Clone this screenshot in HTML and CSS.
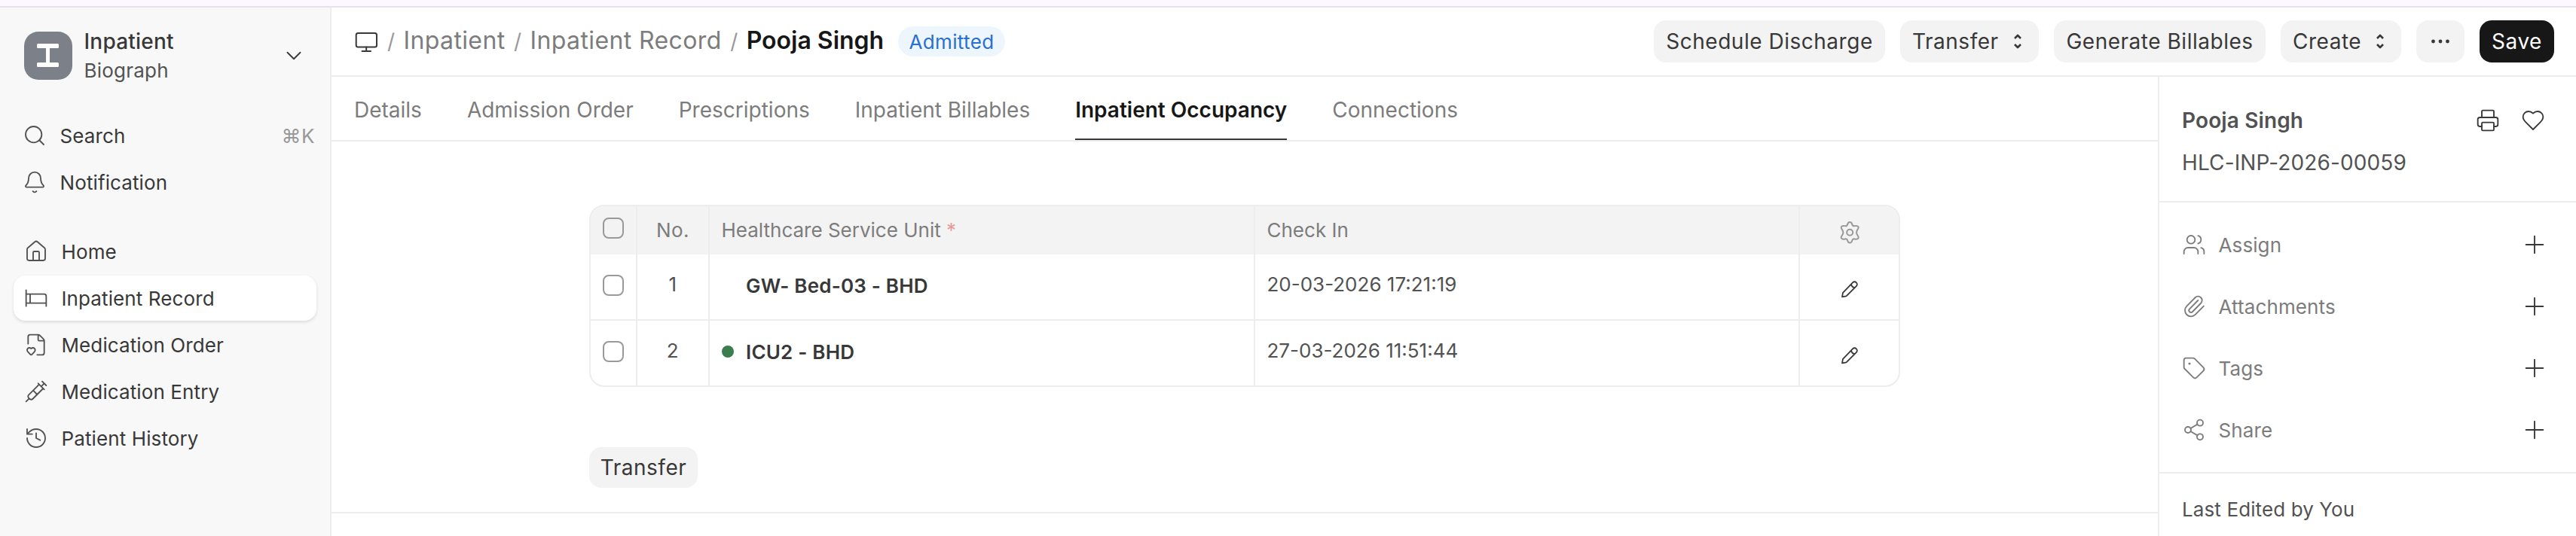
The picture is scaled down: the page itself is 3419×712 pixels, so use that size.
FILE: index.html
```html
<!DOCTYPE html>
<html lang="en">
<head>
<meta charset="utf-8">
<title>Pooja Singh - Inpatient Record</title>
<link rel="stylesheet" href="styles.css">
</head>
<body>
<div class="strip"></div>
<div class="app">
  <aside class="sidebar">
    <div class="workspace">
      <svg class="logo" viewBox="0 0 64 64"><rect width="64" height="64" rx="19" fill="#7c8088"/><path d="M18.5 16h26a1.5 1.5 0 0 1 1.5 1.5v3a1.5 1.5 0 0 1-1.5 1.5H34v19h10.500a1.500 1.500 0 0 1 1.500 1.500v3a1.500 1.500 0 0 1-1.500 1.500h-26a1.500 1.500 0 0 1-1.500-1.500v-3a1.500 1.500 0 0 1 1.500-1.500H29V22H18.500a1.500 1.500 0 0 1-1.500-1.500v-3a1.500 1.500 0 0 1 1.500-1.500z" fill="#fff"/></svg>
      <div class="workspace-names"><span class="workspace-title">Inpatient</span><span class="workspace-sub">Biograph</span></div>
      <svg class="icon chevron" viewBox="0 0 24 24"><path d="m6 9 6 6 6-6"/></svg>
    </div>
    <nav class="quick">
      <a class="nav-item"><svg class="icon" viewBox="0 0 24 24"><circle cx="11" cy="11" r="8"/><path d="m21 21-4.300-4.300"/></svg><span class="t">Search</span><span class="shortcut t">⌘K</span></a>
      <a class="nav-item"><svg class="icon" viewBox="0 0 24 24"><path d="M10.268 21a2 2 0 0 0 3.464 0M3.262 15.326A1 1 0 0 0 4 17h16a1 1 0 0 0 .74-1.673C19.410 13.956 18 12.499 18 8A6 6 0 0 0 6 8c0 4.499-1.411 5.956-2.738 7.326"/></svg><span class="t">Notification</span></a>
    </nav>
    <nav class="links">
      <a class="nav-item"><svg class="icon" viewBox="0 0 24 24"><path d="M15 21v-8a1 1 0 0 0-1-1h-4a1 1 0 0 0-1 1v8"/><path d="M3 10a2 2 0 0 1 .709-1.528l7-6a2 2 0 0 1 2.582 0l7 6A2 2 0 0 1 21 10v9a2 2 0 0 1-2 2H5a2 2 0 0 1-2-2z"/></svg><span class="t">Home</span></a>
      <a class="nav-item active"><svg class="icon" viewBox="0 0 24 24"><path d="M2 4v16M2 8h18a2 2 0 0 1 2 2v10M2 17h20M6 8v9"/></svg><span class="t">Inpatient Record</span></a>
      <a class="nav-item"><svg class="icon" viewBox="0 0 24 24"><path d="M13 22h5a2 2 0 0 0 2-2V8a2.400 2.400 0 0 0-.706-1.706l-3.588-3.588A2.400 2.400 0 0 0 14 2H6a2 2 0 0 0-2 2v7M14 2v5a1 1 0 0 0 1 1h5M3.620 18.800A2.250 2.250 0 1 1 7 15.836a2.250 2.250 0 1 1 3.380 2.966l-2.626 2.856a1 1 0 0 1-1.507 0z"/></svg><span class="t">Medication Order</span></a>
      <a class="nav-item"><svg class="icon" viewBox="0 0 24 24"><path d="m18 2 4 4M17 7l3-3M19 9 8.700 19.300c-1 1-2.500 1-3.400 0l-.6-.6c-1-1-1-2.500 0-3.400L15 5M9 11l4 4M5 19l-3 3M14 4l6 6"/></svg><span class="t">Medication Entry</span></a>
      <a class="nav-item"><svg class="icon" viewBox="0 0 24 24"><path d="M3 12a9 9 0 1 0 9-9 9.750 9.750 0 0 0-6.740 2.740L3 8M3 3v5h5M12 7v5l4 2"/></svg><span class="t">Patient History</span></a>
    </nav>
  </aside>
  <div class="page">
    <header class="topbar">
      <div class="crumbs">
        <svg class="desk" viewBox="0 0 30 28"><rect x="1.700" y="2" width="27.300" height="18.500" rx="2.500"/><path d="M15.200 20.500V26M9.500 26h11.500"/></svg>
        <span class="slash">/</span><span class="crumb">Inpatient</span><span class="slash">/</span><span class="crumb">Inpatient Record</span><span class="slash">/</span><span class="crumb current">Pooja Singh</span>
        <span class="badge">Admitted</span>
      </div>
      <div class="actions">
        <button class="btn b-discharge">Schedule Discharge</button>
        <button class="btn menu b-transfer">Transfer<svg class="updown" viewBox="0 0 12 20"><path d="m2 6 4-4 4 4M2 14l4 4 4-4"/></svg></button>
        <button class="btn b-generate">Generate Billables</button>
        <button class="btn menu b-create">Create<svg class="updown" viewBox="0 0 12 20"><path d="m2 6 4-4 4 4M2 14l4 4 4-4"/></svg></button>
        <button class="btn b-more"><svg class="dots" viewBox="0 0 24 6"><circle cx="2.500" cy="3" r="2.400"/><circle cx="12" cy="3" r="2.400"/><circle cx="21.500" cy="3" r="2.400"/></svg></button>
        <button class="btn primary b-save">Save</button>
      </div>
    </header>
    <div class="body">
      <main class="main">
        <div class="tabs">
          <a class="tab">Details</a><a class="tab">Admission Order</a><a class="tab">Prescriptions</a><a class="tab">Inpatient Billables</a><a class="tab selected">Inpatient Occupancy</a><a class="tab">Connections</a>
        </div>
        <section class="form">
          <div class="grid">
            <div class="grid-row head">
              <div class="cell check"><span class="checkbox"></span></div>
              <div class="cell num">No.</div>
              <div class="cell">Healthcare Service Unit <span class="req">*</span></div>
              <div class="cell">Check In</div>
              <div class="cell tool"><svg class="icon gear" viewBox="0 0 27 30"><path d="M13.200 1c1.600 0 2.400 1 2.900 2.600.5 1.700 1.400 2.900 3.200 2.600 2-.4 4-.9 5 .8.9 1.700.1 2.800-.8 3.900-1.700 2.300-1.700 5.500 0 7.800.9 1.100 1.700 2.300.8 3.900-1 1.700-3 1.200-5 .8-1.800-.3-2.700.9-3.200 2.600-.5 1.600-1.300 2.600-2.900 2.600s-2.400-1-2.900-2.600c-.5-1.700-1.400-2.900-3.200-2.600-2 .4-4 .9-5-.8-.9-1.600-.1-2.800.8-3.900 1.700-2.300 1.700-5.500 0-7.800-.9-1.100-1.700-2.200-.8-3.900 1-1.700 3-1.200 5-.8 1.800.3 2.700-.9 3.200-2.600.5-1.600 1.300-2.600 2.900-2.600z"/><circle cx="13.200" cy="14.800" r="4"/></svg></div>
            </div>
            <div class="grid-row">
              <div class="cell check"><span class="checkbox"></span></div>
              <div class="cell num">1</div>
              <div class="cell unit"><span class="dot off"></span><span class="t">GW- Bed-03 - BHD</span></div>
              <div class="cell">20-03-2026 17:21:19</div>
              <div class="cell tool"><svg class="icon pencil" viewBox="0 0 24 24"><path d="m2 21.300 1-5.500L16 2.300a3.300 3.300 0 0 1 4.800 0 3.300 3.300 0 0 1 0 4.800L7.500 20.300zM14 4.500q1 4.500 4.800 4.600"/></svg></div>
            </div>
            <div class="grid-row">
              <div class="cell check"><span class="checkbox"></span></div>
              <div class="cell num">2</div>
              <div class="cell unit"><span class="dot"></span><span class="t">ICU2 - BHD</span></div>
              <div class="cell">27-03-2026 11:51:44</div>
              <div class="cell tool"><svg class="icon pencil" viewBox="0 0 24 24"><path d="m2 21.300 1-5.500L16 2.300a3.300 3.300 0 0 1 4.800 0 3.300 3.300 0 0 1 0 4.800L7.500 20.300zM14 4.500q1 4.500 4.800 4.600"/></svg></div>
            </div>
          </div>
          <button class="btn b-row">Transfer</button>
        </section>
      </main>
      <aside class="panel">
        <div class="panel-head">
          <div class="panel-title"><strong>Pooja Singh</strong>
            <svg class="icon" viewBox="0 0 24 24"><path d="M6 18H4a2 2 0 0 1-2-2v-5a2 2 0 0 1 2-2h16a2 2 0 0 1 2 2v5a2 2 0 0 1-2 2h-2M6 9V3a1 1 0 0 1 1-1h10a1 1 0 0 1 1 1v6"/><rect x="6" y="14" width="12" height="8" rx="1"/></svg>
            <svg class="icon" viewBox="0 0 24 24"><path d="M19 14c1.490-1.460 3-3.210 3-5.500A5.500 5.500 0 0 0 16.500 3c-1.760 0-3 .5-4.500 2-1.500-1.500-2.740-2-4.500-2A5.500 5.500 0 0 0 2 8.500c0 2.300 1.500 4.050 3 5.500l7 7Z"/></svg>
          </div>
          <div class="panel-id">HLC-INP-2026-00059</div>
        </div>
        <div class="panel-links">
          <div class="link"><svg class="icon" viewBox="0 0 24 24"><path d="M16 21v-2a4 4 0 0 0-4-4H6a4 4 0 0 0-4 4v2M16 3.128a4 4 0 0 1 0 7.744M22 21v-2a4 4 0 0 0-3-3.870"/><circle cx="9" cy="7" r="4"/></svg><span class="t">Assign</span><svg class="icon plus" viewBox="0 0 24 24"><path d="M3.500 12h17M12 3.500v17"/></svg></div>
          <div class="link"><svg class="icon" viewBox="0 0 24 24"><path d="m16 6-8.414 8.586a2 2 0 0 0 2.829 2.829l8.414-8.586a4 4 0 1 0-5.657-5.657l-8.379 8.551a6 6 0 1 0 8.485 8.485l8.379-8.551"/></svg><span class="t">Attachments</span><svg class="icon plus" viewBox="0 0 24 24"><path d="M3.500 12h17M12 3.500v17"/></svg></div>
          <div class="link"><svg class="icon" viewBox="0 0 24 24"><path d="M12.586 2.586A2 2 0 0 0 11.172 2H4a2 2 0 0 0-2 2v7.172a2 2 0 0 0 .586 1.414l8.704 8.704a2.426 2.426 0 0 0 3.420 0l6.580-6.580a2.426 2.426 0 0 0 0-3.420z"/><circle cx="7.500" cy="7.500" r=".5" fill="currentColor"/></svg><span class="t">Tags</span><svg class="icon plus" viewBox="0 0 24 24"><path d="M3.500 12h17M12 3.500v17"/></svg></div>
          <div class="link"><svg class="icon" viewBox="0 0 24 24"><circle cx="18" cy="5" r="3"/><circle cx="6" cy="12" r="3"/><circle cx="18" cy="19" r="3"/><path d="m8.590 13.510 6.830 3.980M15.410 6.510l-6.820 3.980"/></svg><span class="t">Share</span><svg class="icon plus" viewBox="0 0 24 24"><path d="M3.500 12h17M12 3.500v17"/></svg></div>
        </div>
        <div class="panel-foot">Last Edited by You</div>
      </aside>
    </div>
  </div>
</div>
</body>
</html>
```
FILE: styles.css
```css
* { box-sizing: border-box; }
body { margin: 0; width: 3419px; height: 712px; overflow: hidden; display: flex; flex-direction: column; background: #fff; color: #383838; font: 420 26px/30px Inter, "Liberation Sans", sans-serif; letter-spacing: 0.11px; white-space: nowrap; }
.strip { height: 10px; flex: none; background: #fdf7ff; border-bottom: 2px solid #e8e0ec; }
.app { display: flex; flex: 1; min-height: 0; }
.icon { width: 32px; height: 32px; flex: none; fill: none; stroke: currentColor; stroke-width: 1.4; stroke-linecap: round; stroke-linejoin: round; }

/* Sidebar */
.sidebar { width: 440px; flex: none; background: #f8f8f8; border-right: 2px solid #ededed; padding-top: 32px; }
.workspace { display: flex; height: 64px; padding: 0 31px 0 32px; }
.logo { width: 64px; height: 64px; }
.workspace-names { flex: 1; display: flex; flex-direction: column; padding-left: 15.5px; }
.workspace-title { font-size: 28px; font-weight: 500; height: 32px; line-height: 26px; letter-spacing: 0.22px; }
.workspace-sub { color: #525252; height: 34px; line-height: 43px; letter-spacing: 0.22px; }
.chevron { width: 34px; height: 34px; margin-top: 15px; stroke-width: 1.3; }
.quick { padding: 44px 20px 0 16px; display: flex; flex-direction: column; gap: 2px; }
.links { padding: 32px 18px 0; display: flex; flex-direction: column; gap: 2px; }
.nav-item { display: flex; align-items: center; height: 60px; padding: 0 14px; border-radius: 16px; gap: 17.5px; }
.nav-item .t { padding-top: 1px; }
.nav-item .icon { color: #525252; }
.nav-item.active { background: #fff; box-shadow: 0 2px 4px rgba(0, 0, 0, 0.12); }
.quick .nav-item { padding-right: 0; }
.shortcut { margin-left: auto; color: #999; letter-spacing: 0.52px; }

/* Header */
.page { flex: 1; display: flex; flex-direction: column; min-width: 0; }
.topbar { height: 92px; flex: none; border-bottom: 2px solid #ededed; display: flex; justify-content: space-between; padding: 0 29px 0 31px; }
.crumbs { display: flex; align-items: center; height: 90px; color: #7c7c7c; }
.desk { width: 30px; height: 28px; fill: none; stroke: #383838; stroke-width: 2; stroke-linecap: round; margin: 2px 13px 0 0; }
.slash { color: #999; font-size: 28px; width: 10px; margin: 0 11.5px; text-align: center; letter-spacing: 0; }
.desk + .slash { margin-left: 0; }
.crumb { font-size: 32px; line-height: 36px; letter-spacing: 0.38px; margin-bottom: 3px; }
.crumb.current { color: #171717; font-weight: 570; letter-spacing: 0; }
.badge { margin-left: auto; width: 142px; height: 40px; padding-top: 1px; border-radius: 20px; background: #edf6fd; color: #2a6fd0; letter-spacing: 0.35px; display: flex; align-items: center; justify-content: center; }
.crumbs { width: 863px; }
.actions { display: flex; gap: 20px; padding-top: 17px; }
.btn { height: 56px; border: 0; border-radius: 16px; background: #f3f3f3; padding: 0; color: inherit; font: inherit; font-size: 28px; letter-spacing: 0.52px; display: flex; align-items: center; justify-content: center; }
.btn.menu { justify-content: flex-start; padding-left: 16px; }
.b-discharge { width: 307px; }
.b-transfer { width: 184px; }
.b-generate { width: 281px; }
.b-create { width: 160px; }
.b-more { width: 64px; }
.b-save { width: 99px; }
.primary { background: #171717; color: #fff; }
.updown { width: 12px; height: 20px; margin-left: 19px; fill: none; stroke: #383838; stroke-width: 2.6; stroke-linejoin: round; }
.dots { width: 24px; height: 6px; fill: #383838; }

/* Form */
.body { flex: 1; display: flex; min-height: 0; }
.main { width: 2424px; flex: none; }
.tabs { height: 86px; border-bottom: 2px solid #ededed; padding-left: 30px; display: flex; gap: 60px; font-size: 28px; color: #7c7c7c; letter-spacing: 0; }
.tab { height: 84px; line-height: 88px; }
.tab.selected { color: #171717; font-weight: 600; border-bottom: 2px solid #383838; }
.form { height: 494px; border-bottom: 2px solid #ededed; padding: 84px 0 0 342px; }

.grid { width: 1740px; height: 242px; border: 2px solid #ededed; border-radius: 20px; overflow: hidden; color: #525252; letter-spacing: 0; }
.grid-row { display: grid; grid-template-columns: 62px 96px 724px 723px 1fr; height: 88px; border-bottom: 2px solid #ededed; }
.grid-row.head { height: 64px; background: #f3f3f3; border-bottom: 0; color: #7c7c7c; }
.cell { border-right: 2px solid #ededed; padding: 25px 0 0 15.5px; }
.cell:last-child { border-right: 0; }
.head .cell { padding-top: 17px; }
.cell.num { text-align: center; padding-left: 0; letter-spacing: 0.52px; }
.cell.check { padding: 27px 0 0 16px; }
.head .cell.check { padding-top: 15px; }
.checkbox { display: block; width: 28px; height: 28px; border: 2px solid #999; border-radius: 8px; }
.req { color: #e79a9a; }
.cell.unit { display: flex; align-items: flex-start; padding: 27px 0 0 16px; color: #383838; font-weight: 580; letter-spacing: 0.2px; }
.dot { width: 16px; height: 16px; border-radius: 50%; background: #3a7d4f; margin: 6px 16px 0 0; }
.dot.off { visibility: hidden; }
.cell.tool { padding: 35px 0 0 54px; }
.head .cell.tool { padding: 20px 0 0 53px; }
.gear { width: 27px; height: 30px; stroke-width: 2; display: block; color: #999; }
.pencil { width: 24px; height: 24px; stroke-width: 1.8; display: block; color: #383838; }
.b-row { width: 144px; height: 54px; margin-top: 80px; }

/* Record panel */
.panel { flex: 1; border-left: 2px solid #ededed; color: #525252; }
.panel-head { height: 167px; border-bottom: 2px solid #ededed; padding: 42px 41px 0 30px; font-size: 28px; letter-spacing: 0.12px; }
.panel-title { display: flex; align-items: center; height: 32px; }
.panel-title strong { flex: 1; font-weight: 580; }
.panel-title .icon { color: #383838; }
.panel-title .icon + .icon { margin-left: 28px; }
.panel-id { padding-top: 25px; }
.panel-links { height: 360px; border-bottom: 2px solid #ededed; padding: 15px 39px 0 29.5px; color: #7c7c7c; }
.link { display: flex; align-items: center; height: 82px; }
.link .t { flex: 1; margin-left: 17px; padding-top: 1px; }
.plus { color: #383838; }
.panel-foot { padding: 33px 0 0 30px; }
```
